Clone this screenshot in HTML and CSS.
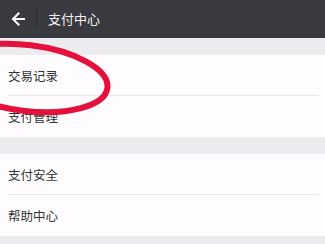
FILE: index.html
```html
<!DOCTYPE html>
<html lang="zh">
<head>
<meta charset="utf-8">
<link rel="stylesheet" href="styles.css">
</head>
<body>
<div class="page">
  <header class="topbar">
    <span class="back">
      <svg width="14" height="14" viewBox="0 0 14 14"><path d="M13 7H2M7.5 1.5L2 7l5.5 5.5" fill="none" stroke="#fff" stroke-width="2" stroke-linecap="square"/></svg>
    </span>
    <span class="sep"></span>
    <span class="title">支付中心</span>
  </header>
  <div class="gap"></div>
  <div class="group">
    <div class="row">交易记录</div>
    <div class="line"></div>
    <div class="row tall">支付管理</div>
  </div>
  <div class="gap gap2"></div>
  <div class="group">
    <div class="row">支付安全</div>
    <div class="line"></div>
    <div class="row tall">帮助中心</div>
  </div>
  <svg class="circle" width="325" height="244" viewBox="0 0 325 244"><ellipse cx="27" cy="78" rx="81" ry="33" transform="rotate(7 27 78)" fill="none" stroke="#e3113c" stroke-width="6"/></svg>
</div>
</body>
</html>
```
FILE: styles.css
```css
html, body { margin: 0; padding: 0; }
body {
  background: #ececf0;
  font-family: "Noto Sans CJK SC", "Noto Sans", sans-serif;
  width: 325px;
  height: 244px;
  overflow: hidden;
}
.page { position: relative; }
.topbar {
  height: 38px;
  background: #393a3f;
  display: flex;
  align-items: center;
}
.back {
  width: 36px;
  display: flex;
  justify-content: center;
  margin-top: -1px;
}
.sep {
  width: 1px;
  height: 22px;
  background: #2c2d31;
}
.title {
  color: #f2f2f2;
  font-size: 13px;
  margin-left: 11px;
  margin-top: -1px;
}
.gap { height: 17px; }
.gap2 { height: 17px; }
.group { background: #fefcfe; }
.row {
  height: 40px;
  display: flex;
  align-items: center;
  padding-left: 8px;
  font-size: 12.5px;
  color: #333;
}
.row.tall { height: 41px; }
.line {
  height: 1px;
  background: #ebe8ec;
  margin: 0 6px 0 8px;
}
.circle {
  position: absolute;
  left: 0;
  top: 0;
  pointer-events: none;
}
```
